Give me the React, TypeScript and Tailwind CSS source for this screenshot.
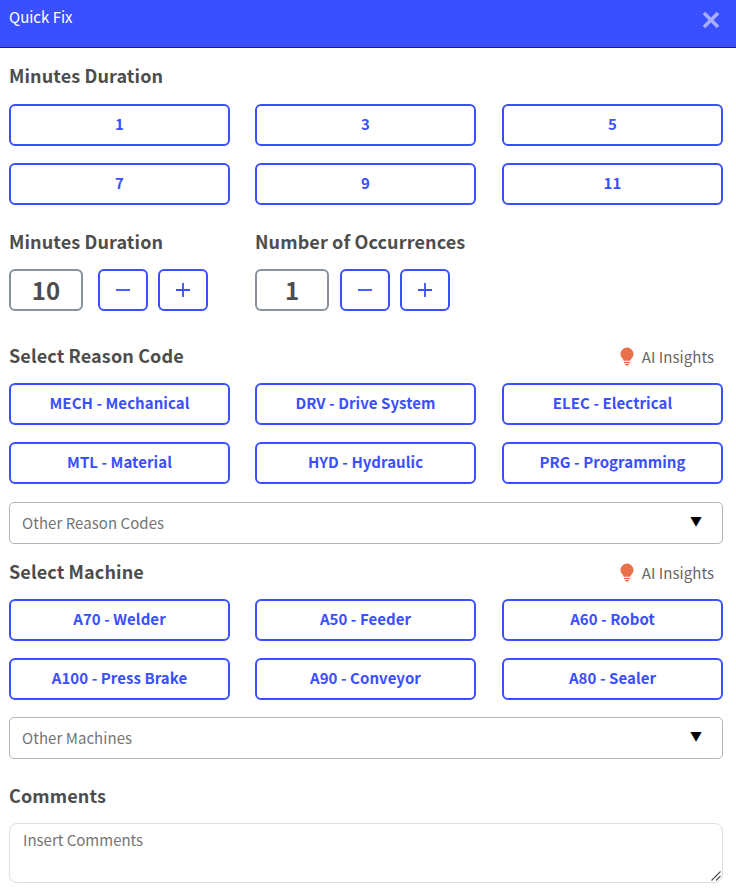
import React from "react";

const font = "font-['Noto_Sans_CJK_JP','Source_Sans_Pro','Noto_Sans',sans-serif]";

const minutes = ["1", "3", "5", "7", "9", "11"];
const reasons = [
  "MECH - Mechanical",
  "DRV - Drive System",
  "ELEC - Electrical",
  "MTL - Material",
  "HYD - Hydraulic",
  "PRG - Programming",
];
const machines = [
  "A70 - Welder",
  "A50 - Feeder",
  "A60 - Robot",
  "A100 - Press Brake",
  "A90 - Conveyor",
  "A80 - Sealer",
];

const Heading = ({ children }: { children: React.ReactNode }) => (
  <h2 className="h-[24px] text-[18px] leading-[22px] font-bold tracking-[0.12px] text-[#4d4d4d]">{children}</h2>
);

const ButtonGrid = ({ items }: { items: string[] }) => (
  <div className="grid grid-cols-[246px_247px_221px] gap-y-[17px]">
    {items.map((item) => (
      <button
        key={item}
        className="h-[42px] w-[221px] rounded-[6px] border-2 border-[#3a4fff] bg-white pb-[2px] text-[15px] font-bold tracking-[0.06px] text-[#3a4fff]"
      >
        {item}
      </button>
    ))}
  </div>
);

const Insights = () => (
  <div className="flex items-center gap-[7px] pt-[2px] pr-[9px] text-[15px] tracking-[0.05px] text-[#666666]">
    <svg width="16" height="20" viewBox="0 0 15 20" fill="#e8704a">
      <path d="M7.5 .5a6.5 6.5 0 0 0-6.5 6.5c0 2.5 1.4 3.8 2.3 5.1.4.6.7 1.1.8 1.7h6.8c.1-.6.4-1.1.8-1.7.9-1.3 2.3-2.6 2.3-5.1a6.5 6.5 0 0 0-6.5-6.5z" />
      <path d="M4.5 14.8h6v1.4h-6zM5.4 17h4.2l-.9 1.6H6.3z" />
    </svg>
    <span>AI Insights</span>
  </div>
);

const Stepper = ({ value, gap }: { value: string; gap: string }) => (
  <div className="flex items-center">
    <div className="flex h-[42px] w-[74px] items-center justify-center rounded-[6px] border-2 border-[#87929d] text-[24px] font-bold text-[#4d4d4d]">
      {value}
    </div>
    <button
      className={`${gap} flex h-[42px] w-[50px] items-center justify-center rounded-[6px] border-2 border-[#3a4fff] text-[#3a4fff]`}
    >
      <svg width="16" height="16" viewBox="0 0 16 16" stroke="currentColor" strokeWidth="1.8">
        <path d="M1 8h14" />
      </svg>
    </button>
    <button className="ml-[10px] flex h-[42px] w-[50px] items-center justify-center rounded-[6px] border-2 border-[#3a4fff] text-[#3a4fff]">
      <svg width="16" height="16" viewBox="0 0 16 16" stroke="currentColor" strokeWidth="1.8">
        <path d="M1 8h14M8 1v14" />
      </svg>
    </button>
  </div>
);

const FakeSelect = ({ label }: { label: string }) => (
  <div className="flex h-[42px] items-center justify-between rounded-[5px] border border-[#b3b3b3] pr-[20px] pl-[12px] text-[15px] tracking-[0.05px] text-[#757575]">
    <span>{label}</span>
    <span className="pb-[4px] text-[12px] text-black">▼</span>
  </div>
);

export default function App() {
  return (
    <div className={`${font} h-[893px] w-[736px] overflow-hidden bg-white`}>
      <div className="flex h-[48px] items-start justify-between border-b border-[#0f2a55] bg-[#3a4fff] pr-[15px] pl-[9px]">
        <span className="pt-[5px] text-[15px] leading-[24px] text-white">Quick Fix</span>
        <svg className="mt-[10px]" width="20" height="20" viewBox="0 0 20 20" stroke="#a5aeff" strokeWidth="3.6">
          <path d="M3 3l14 14M17 3L3 17" />
        </svg>
      </div>

      <div className="pr-[13px] pl-[9px]">
        <div className="pt-[16px]">
          <Heading>Minutes Duration</Heading>
        </div>
        <div className="mt-[16px]">
          <ButtonGrid items={minutes} />
        </div>

        <div className="mt-[25px] flex">
          <div className="w-[246px]">
            <Heading>Minutes Duration</Heading>
            <div className="mt-[15px]">
              <Stepper value="10" gap="ml-[15px]" />
            </div>
          </div>
          <div>
            <Heading>Number of Occurrences</Heading>
            <div className="mt-[15px]">
              <Stepper value="1" gap="ml-[11px]" />
            </div>
          </div>
        </div>

        <div className="mt-[33px] flex h-[24px] items-start justify-between">
          <Heading>Select Reason Code</Heading>
          <Insights />
        </div>
        <div className="mt-[15px]">
          <ButtonGrid items={reasons} />
        </div>
        <div className="mt-[18px]">
          <FakeSelect label="Other Reason Codes" />
        </div>

        <div className="mt-[16px] flex h-[24px] items-start justify-between">
          <Heading>Select Machine</Heading>
          <Insights />
        </div>
        <div className="mt-[15px]">
          <ButtonGrid items={machines} />
        </div>
        <div className="mt-[17px]">
          <FakeSelect label="Other Machines" />
        </div>

        <div className="mt-[25px]">
          <Heading>Comments</Heading>
        </div>
        <div className="relative mt-[15px]">
          <textarea
            placeholder="Insert Comments"
            className="block h-[60px] w-full resize-none rounded-[8px] border border-[#dedede] px-[13px] py-[4px] text-[15px] leading-[24px] text-[#757575] outline-none placeholder:text-[#757575]"
          />
          <svg className="absolute right-[2px] bottom-[2px]" width="10" height="10" viewBox="0 0 10 10" stroke="#4d4d4d" strokeWidth="1.1">
            <path d="M0.5 9.5L9.5 0.5M5 9.5L9.5 5" />
          </svg>
        </div>
      </div>
    </div>
  );
}
